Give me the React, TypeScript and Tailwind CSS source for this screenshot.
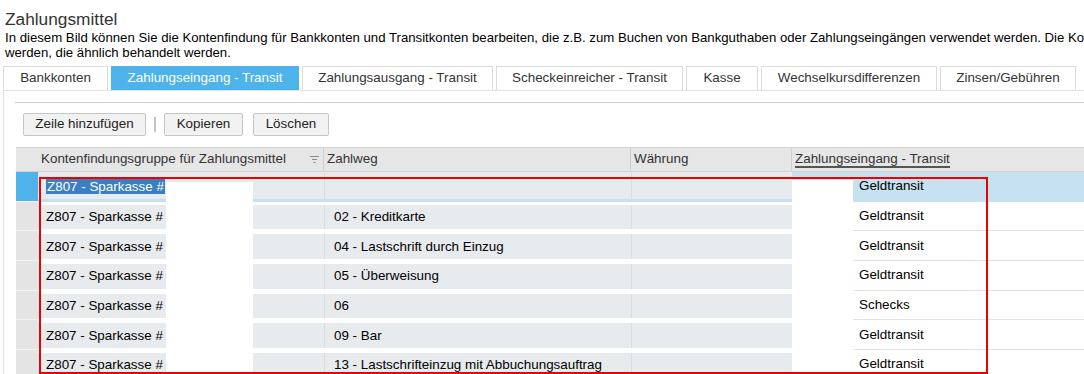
import React from 'react';

const tabs = [
  { label: 'Bankkonten', w: 'w-[105px]' },
  { label: 'Zahlungseingang - Transit', w: 'w-[188px]', active: true },
  { label: 'Zahlungsausgang - Transit', w: 'w-[191px]' },
  { label: 'Scheckeinreicher - Transit', w: 'w-[187px]' },
  { label: 'Kasse', w: 'w-[72px]' },
  { label: 'Wechselkursdifferenzen', w: 'w-[176px]' },
  { label: 'Zinsen/Gebühren', w: 'w-[136px]' },
];

const rows = [
  { weg: '', konto: 'Geldtransit' },
  { weg: '02 - Kreditkarte', konto: 'Geldtransit' },
  { weg: '04 - Lastschrift durch Einzug', konto: 'Geldtransit' },
  { weg: '05 - Überweisung', konto: 'Geldtransit' },
  { weg: '06', konto: 'Schecks' },
  { weg: '09 - Bar', konto: 'Geldtransit' },
  { weg: '13 - Lastschrifteinzug mit Abbuchungsauftrag', konto: 'Geldtransit' },
];

const FilterIcon = () => (
  <svg width="9" height="7" viewBox="0 0 9 7" className="mr-[4px]">
    <rect x="0" y="0" width="9" height="1" fill="#8a8a8a" />
    <rect x="2" y="3" width="5" height="1" fill="#8a8a8a" />
    <rect x="3.5" y="6" width="2" height="1" fill="#8a8a8a" />
  </svg>
);

const App: React.FC = () => {
  return (
    <div className="relative w-[1084px] h-[374px] overflow-hidden bg-white font-['Liberation_Sans',Arial,sans-serif]">
      <div className="w-[1300px]">
        <div className="pt-[9px] pl-[5px] text-[17.3px] leading-[20px] text-[#333]">Zahlungsmittel</div>
        <div className="pl-[5px] pt-[1px] text-[13.2px] leading-[15px] text-black whitespace-nowrap">
          In diesem Bild können Sie die Kontenfindung für Bankkonten und Transitkonten bearbeiten, die z.B. zum Buchen von Bankguthaben oder Zahlungseingängen verwendet werden. Die Kontenfindung kann auch für weitere Konten verwendet
          <br />
          werden, die ähnlich behandelt werden.
        </div>

        {/* tabs */}
        <div className="flex gap-[3px] pl-[3px] mt-[6px] h-[24px]">
          {tabs.map((t) => (
            <div
              key={t.label}
              className={`${t.w} flex items-center justify-center text-[13.4px] ${
                t.active ? 'bg-[#4db3ea] text-white' : 'border border-[#dcdcdc] border-b-0 text-[#333]'
              }`}
            >
              {t.label}
            </div>
          ))}
        </div>

        {/* panel */}
        <div className="ml-[3px] border-l border-t border-[#e2e2e2] h-[300px]">
          <div className="ml-[11px] mt-[11px] border-t border-[#cfcfcf]" />
          <div className="flex items-center ml-[19px] mt-[10px] h-[23px]">
            <button className="h-[23px] w-[123px] border border-[#c6c6c6] rounded-[2px] bg-[#f2f2f2] text-[13.4px] text-[#222]">
              Zeile hinzufügen
            </button>
            <div className="w-[2px] h-[15px] bg-[#c4c4c4] mx-[8px]" />
            <button className="h-[23px] w-[79px] border border-[#c6c6c6] rounded-[2px] bg-[#f2f2f2] text-[13.4px] text-[#222]">
              Kopieren
            </button>
            <button className="ml-[10px] h-[23px] w-[76px] border border-[#c6c6c6] rounded-[2px] bg-[#f2f2f2] text-[13.4px] text-[#222]">
              Löschen
            </button>
          </div>

          {/* table */}
          <div className="ml-[12px] mt-[11px]">
            <div className="flex h-[25px] bg-[#e6e6e6] border-t border-b border-[#d2d2d2] text-[13.4px] text-[#333]">
              <div className="w-[22px]" />
              <div className="w-[286px] flex items-center justify-between pl-[3px] border-r border-[#d0d0d0]">
                <span>Kontenfindungsgruppe für Zahlungsmittel</span>
                <FilterIcon />
              </div>
              <div className="w-[307px] flex items-center pl-[3px] border-r border-[#d0d0d0]">Zahlweg</div>
              <div className="w-[161px] flex items-center pl-[3px] border-r border-[#d0d0d0]">Währung</div>
              <div className="w-[400px] flex items-center pl-[3px]">
                <span className="border-b-2 border-[#555] leading-[15px]">Zahlungseingang - Transit</span>
              </div>
            </div>

            {rows.map((r, i) => {
              const sel = i === 0;
              return (
                <div key={i} className="flex h-[29.67px] text-[13.4px] text-black">
                  <div className={`w-[22px] border-b border-[#f4f4f4] ${sel ? 'bg-[#4db3ea]' : 'bg-[#e4e4e4]'}`} />
                  <div className={`flex w-[754px] ${sel ? 'pb-[3px] bg-[#c5e0ee]' : 'pt-[3px] pb-[2px] bg-white'}`}>
                    <div className={`w-[286px] bg-[#e8ebee] flex items-center pl-[8px] ${sel ? 'pt-[2px]' : ''}`}>
                      {sel ? <span className="bg-[#3a7fc1] text-white px-[1px] leading-[15px]">Z807 - Sparkasse #</span> : 'Z807 - Sparkasse #'}
                    </div>
                    <div className="w-[307px] bg-[#e8ebee] border-l border-[#d9dcdf] flex items-center pl-[9px]">{r.weg}</div>
                    <div className="w-[161px] bg-[#e8ebee] border-l border-[#dadde0]" />
                  </div>
                  <div className={`w-[400px] flex items-center pl-[67px] border-b ${sel ? 'bg-[#c6e1ef] border-[#c6e1ef]' : 'bg-white border-[#e3e3e3]'}`}>
                    {r.konto}
                  </div>
                </div>
              );
            })}
          </div>
        </div>
      </div>

      {/* redacted areas */}
      <div className="absolute left-[166px] top-[182px] w-[87px] h-[200px] bg-white" />
      <div className="absolute left-[792px] top-[180px] w-[61px] h-[200px] bg-white" />
      {/* red marker */}
      <div className="absolute left-[39px] top-[177px] w-[949px] h-[197px] border-2 border-[#ee0000]" />
    </div>
  );
};

export default App;
